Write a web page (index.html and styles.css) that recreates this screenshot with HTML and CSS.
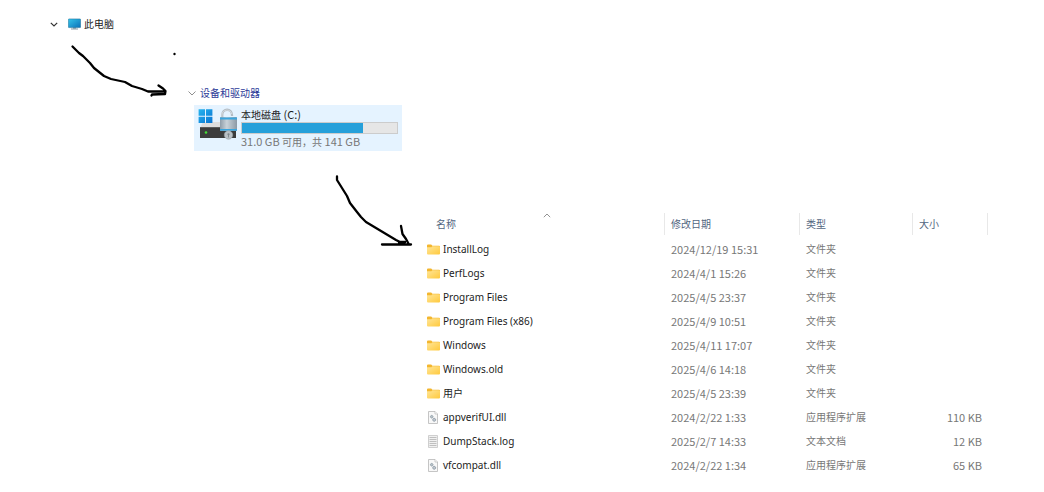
FILE: index.html
```
<!DOCTYPE html>
<html lang="zh-CN">
<head>
<meta charset="utf-8">
<meta name="viewport" content="width=device-width, initial-scale=1">
<title>此电脑</title>
<link rel="stylesheet" href="styles.css">
</head>
<body>
<svg class="sprites" aria-hidden="true">
  <defs>
    <linearGradient id="screen-fill" x1="0" y1="0" x2="1" y2="1"><stop offset="0" stop-color="#35c5ea"/><stop offset="1" stop-color="#0a70b8"/></linearGradient>
    <linearGradient id="folder-fill" x1="0" y1="0" x2="1" y2="1"><stop offset="0" stop-color="#ffe69a"/><stop offset="1" stop-color="#ffc93c"/></linearGradient>
    <linearGradient id="logo-fill" x1="0" y1="0" x2="1" y2="1"><stop offset="0" stop-color="#27b4ee"/><stop offset="1" stop-color="#0873d2"/></linearGradient>
    <linearGradient id="lock-fill" x1="0" y1="0" x2="1" y2="0"><stop offset="0" stop-color="#8f9da9"/><stop offset=".4" stop-color="#c9d2d9"/><stop offset="1" stop-color="#8c99a5"/></linearGradient>
  </defs>
  <symbol id="folder" viewBox="0 0 13 13">
    <path d="M0 2.500Q0 1.500 1 1.500H4.200L5.400 2.800H12Q13 2.800 13 3.800V6H0Z" fill="#f3b62e"/>
    <path d="M0 4.200H4.400L5.400 3.200H12Q13 3.200 13 4.200V10.500Q13 11.500 12 11.500H1Q0 11.500 0 10.500Z" fill="url(#folder-fill)"/>
  </symbol>
  <symbol id="dll" viewBox="0 0 13 13">
    <path d="M1.500.5H8L10.500 3V12.500H1.500Z" fill="#f8f8f8" stroke="#b8b8b8" stroke-width=".8"/>
    <path d="M8 .5V3H10.500" fill="#fff" stroke="#b8b8b8" stroke-width=".7"/>
    <g fill="#dbe4eb" stroke="#8c99a4" stroke-width=".9"><circle cx="4.700" cy="5.700" r="1.200"/><circle cx="7.200" cy="8.800" r="1.400"/></g>
    <path d="M4.700 3.800V7.600M2.800 5.700H6.600M7.200 6.700V10.900M5.100 8.800H9.300" stroke="#a3adb5" stroke-width=".4"/>
  </symbol>
  <symbol id="text-file" viewBox="0 0 13 13">
    <path d="M1.500.5H10.500V12.500H1.500Z" fill="#f0f0f0" stroke="#c4c4c4" stroke-width=".8"/>
    <path d="M2.500 2.500H9.500M2.500 4.500H9.500M2.500 6.500H9.500M2.500 8.500H9.500M2.500 10.500H9.500" stroke="#b3b3b3" stroke-width=".8"/>
  </symbol>
</svg>

<main class="guide">
  <div class="tree-row">
    <button class="toggle" type="button" aria-label="折叠此电脑" aria-expanded="true"><svg width="8" height="5" viewBox="0 0 8 5"><path d="M.8.8 4 4 7.2.8" fill="none" stroke="#333" stroke-width="1.200"/></svg></button>
    <svg class="pc-icon" width="13" height="12" viewBox="0 0 13 12" aria-hidden="true"><path d="M5 9H8V11H5Z" fill="#a5b4bc"/><path d="M3 11H10" stroke="#8b9ba5"/><rect x=".4" y=".9" width="12.2" height="8.7" rx=".6" fill="url(#screen-fill)" stroke="#176c94" stroke-width=".5"/></svg>
    <span class="cjk">此电脑</span>
  </div>

  <section class="devices">
    <h2 class="group-title">
      <button class="toggle" type="button" aria-label="折叠设备和驱动器" aria-expanded="true"><svg width="8" height="5" viewBox="0 0 8 5"><path d="M.5.5 4 4 7.5.5" fill="none" stroke="#828282" stroke-width=".9"/></svg></button>
      <span class="cjk">设备和驱动器</span>
    </h2>
    <div class="drive">
      <svg class="drive-icon" width="40" height="36" viewBox="0 0 40 36" aria-hidden="true">
        <path d="M5 15H35L38 21H2Z" fill="#dedede"/>
        <rect x="2" y="20" width="36" height="11" rx=".6" fill="#3c3c3c"/>
        <path d="M2 20.500H38" stroke="#5c5c5c"/>
        <circle cx="8" cy="25.500" r="1.300" fill="#43df36"/>
        <path d="M.6 2.300H7V8.700H.6ZM8 2.300H14.400V8.700H8ZM.6 9.700H7V16.100H.6ZM8 9.700H14.400V16.100H8Z" fill="url(#logo-fill)"/>
        <path d="M24.200 12V8C24.200 1 34 1 34 8V9" fill="none" stroke="#b4bdc4" stroke-width="2.300"/>
        <path d="M23.900 11.500V8C24 1.800 33 1.500 33.700 7" fill="none" stroke="#dce1e5" stroke-width=".8"/>
        <rect x="22" y="10" width="17" height="14" rx="1" fill="url(#lock-fill)"/>
        <path d="M22 11.500H39M22 22.800H39" stroke="#3ba5dd" stroke-width="1.800"/>
        <circle cx="30.500" cy="28" r="4.200" fill="#b9c0c5" stroke="#9ca4a9" stroke-width=".6"/>
        <circle cx="30.500" cy="27.300" r="1.100" fill="#7d868c"/><path d="M30.500 27.500V30.500" stroke="#7d868c" stroke-width=".9"/>
      </svg>
      <div class="drive-info">
        <span class="drive-name"><span class="cjk">本地磁盘</span> (C:)</span>
        <div class="capacity" role="progressbar" aria-label="已用空间" aria-valuemin="0" aria-valuemax="141" aria-valuenow="110"><div class="used" style="width:78%"></div></div>
        <span class="free">31.0 GB <span class="cjk">可用，共</span> 141 GB</span>
      </div>
    </div>
  </section>

  <table class="files">
    <thead>
      <tr>
        <th class="col-name" scope="col" aria-sort="ascending"><button type="button">名称</button><svg class="sort" width="8" height="5" viewBox="0 0 8 5" aria-hidden="true"><path d="M.8 4.2 4 1 7.2 4.2" fill="none" stroke="#777" stroke-width=".8"/></svg></th>
        <th class="col-date" scope="col"><button type="button">修改日期</button></th>
        <th class="col-type" scope="col"><button type="button">类型</button></th>
        <th class="col-size" scope="col"><button type="button">大小</button></th>
      </tr>
    </thead>
    <tbody>
      <tr><td><span class="file"><svg class="file-icon"><use href="#folder"/></svg>InstallLog</span></td><td>2024/12/19 15:31</td><td class="cjk">文件夹</td><td></td></tr>
      <tr><td><span class="file"><svg class="file-icon"><use href="#folder"/></svg>PerfLogs</span></td><td>2024/4/1 15:26</td><td class="cjk">文件夹</td><td></td></tr>
      <tr><td><span class="file"><svg class="file-icon"><use href="#folder"/></svg>Program Files</span></td><td>2025/4/5 23:37</td><td class="cjk">文件夹</td><td></td></tr>
      <tr><td><span class="file"><svg class="file-icon"><use href="#folder"/></svg>Program Files (x86)</span></td><td>2025/4/9 10:51</td><td class="cjk">文件夹</td><td></td></tr>
      <tr><td><span class="file"><svg class="file-icon"><use href="#folder"/></svg>Windows</span></td><td>2025/4/11 17:07</td><td class="cjk">文件夹</td><td></td></tr>
      <tr><td><span class="file"><svg class="file-icon"><use href="#folder"/></svg>Windows.old</span></td><td>2025/4/6 14:18</td><td class="cjk">文件夹</td><td></td></tr>
      <tr><td><span class="file"><svg class="file-icon"><use href="#folder"/></svg>用户</span></td><td>2025/4/5 23:39</td><td class="cjk">文件夹</td><td></td></tr>
      <tr><td><span class="file"><svg class="file-icon"><use href="#dll"/></svg>appverifUI.dll</span></td><td>2024/2/22 1:33</td><td class="cjk">应用程序扩展</td><td class="size">110 KB</td></tr>
      <tr><td><span class="file"><svg class="file-icon"><use href="#text-file"/></svg>DumpStack.log</span></td><td>2025/2/7 14:33</td><td class="cjk">文本文档</td><td class="size">12 KB</td></tr>
      <tr><td><span class="file"><svg class="file-icon"><use href="#dll"/></svg>vfcompat.dll</span></td><td>2024/2/22 1:34</td><td class="cjk">应用程序扩展</td><td class="size">65 KB</td></tr>
    </tbody>
  </table>

  <!-- Hand-drawn arrows laid over the steps -->
  <svg class="ink" width="440" height="260" viewBox="0 0 440 260" aria-hidden="true">
    <g fill="none" stroke="#000" stroke-width="2.300" stroke-linecap="round" stroke-linejoin="round">
      <path d="M72.500 46.500 79 53 83 56 90 63 94 68 99 72 104 76 111 79 125 82 132 86 142 89 148 91.500H165M158.500 85.500 163 88.500 165.500 91 165 94 152 94.500 151.500 95.500"/>
      <path d="M337 176.500V180L342 188 347 196 350 203 357 212 361 217 366 222 381 231 396 240 400 242H405M382 244.500H411M401 226 402.500 234 406 239 409 244.500M399 242.500 405 242"/>
    </g>
    <circle cx="174.500" cy="54" r="1.200"/>
  </svg>
</main>
</body>
</html>
```
FILE: styles.css
```
* { box-sizing: border-box; }

body {
  margin: 0;
  background: #fff;
  color: #1c1c1c;
  font: 11px/16px "Noto Sans CJK SC", "Noto Sans", sans-serif;
}

button {
  padding: 0;
  border: 0;
  background: none;
  color: inherit;
  font: inherit;
}

.sprites {
  position: absolute;
  width: 0;
  height: 0;
}

.guide {
  position: relative;
  padding: 16px 56px 14px 50px;
}

.cjk { font-size: 10px; }

.toggle {
  display: flex;
  align-items: center;
  height: 16px;
}

.tree-row {
  display: flex;
  align-items: center;
}

.pc-icon { margin: 0 3px 0 10px; }

.devices { margin: 53px 0 0 138px; }

.group-title {
  display: flex;
  align-items: center;
  gap: 4px;
  margin: 0;
  color: #2c3a98;
  font-size: 10px;
  font-weight: 400;
}

.drive {
  display: flex;
  gap: 3px;
  width: 208px;
  margin: 4px 0 0 6px;
  padding: 2px 4px;
  background: #e5f3ff;
}

.drive-icon { flex: none; }

.drive-info { flex: 1; }

.drive-name,
.free {
  display: block;
  height: 15px;
  line-height: 15px;
  white-space: pre;
}

.free { color: #777; }

.capacity {
  height: 12px;
  border: 1px solid #ccc;
  background: #e6e6e6;
}

.used {
  height: 100%;
  background: #26a0da;
}

.files {
  width: calc(100% - 371px);
  margin: 62px 0 0 371px;
  border-collapse: collapse;
  table-layout: fixed;
}

.col-date { width: 135px; }
.col-type { width: 113px; }
.col-size { width: 75px; }

.files th {
  position: relative;
  height: 24px;
  padding: 0 0 2px;
  color: #53667f;
  font-size: 10px;
  font-weight: 400;
  text-align: left;
}

.files th button {
  display: block;
  width: 100%;
  height: 22px;
  padding-left: 6px;
  border-right: 1px solid #e8e8e8;
  text-align: left;
}

.files .col-name button { padding-left: 15px; }

.sort {
  position: absolute;
  top: 0;
  left: 50%;
}

.files td {
  height: 24px;
  padding: 0 0 0 6px;
  color: #777;
  white-space: nowrap;
}

.file {
  display: flex;
  align-items: center;
  gap: 3px;
  color: #1c1c1c;
  font-family: "Noto Sans", "Noto Sans CJK SC", sans-serif;
  font-size: 10px;
}

.file-icon {
  width: 13px;
  height: 13px;
}

.files .size {
  padding-right: 6px;
  text-align: right;
}

.ink {
  position: absolute;
  top: 0;
  left: 0;
  pointer-events: none;
}
```
